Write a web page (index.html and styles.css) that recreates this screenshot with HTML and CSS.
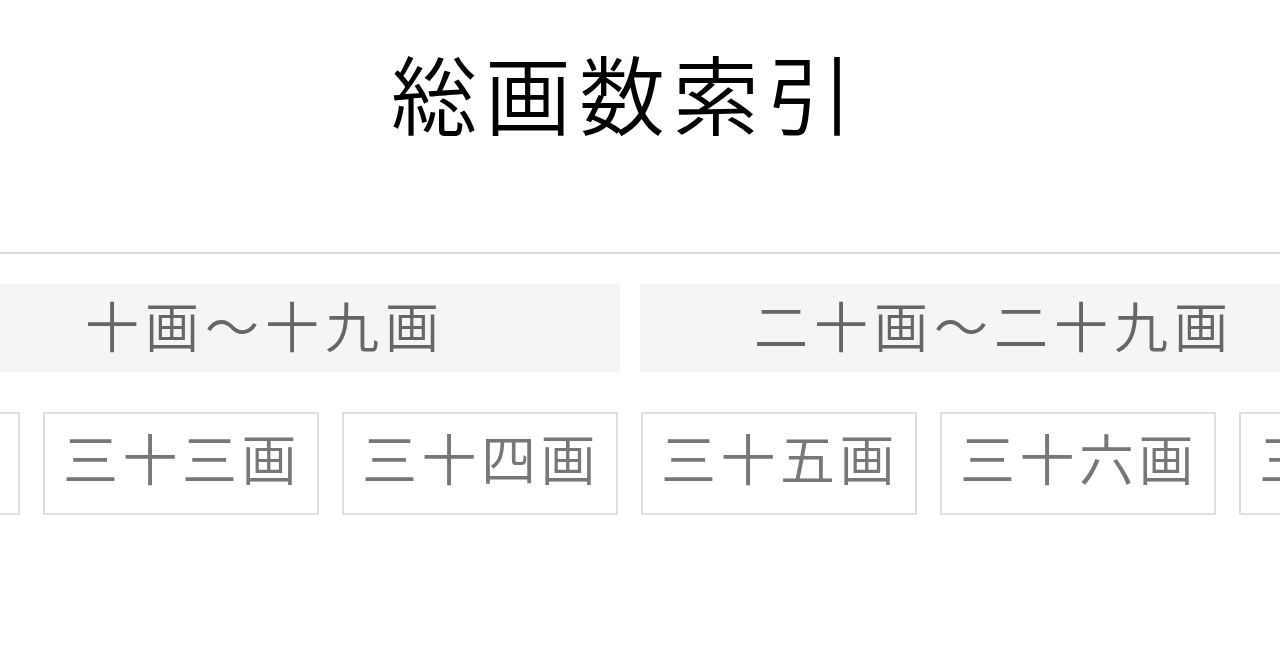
FILE: index.html
```html
<!DOCTYPE html>
<html lang="ja">
<head>
<meta charset="utf-8">
<title>総画数索引</title>
<link rel="stylesheet" href="styles.css">
</head>
<body>
<main class="page">
  <h1 class="title">総画数索引</h1>
  <hr class="rule">
  <div class="ranges">
    <a class="range">十画～十九画</a>
    <a class="range range-wide">二十画～二十九画</a>
  </div>
  <div class="counts">
    <a class="count">三十二画</a>
    <a class="count">三十三画</a>
    <a class="count">三十四画</a>
    <a class="count">三十五画</a>
    <a class="count">三十六画</a>
    <a class="count">三十七画</a>
  </div>
</main>
</body>
</html>
```

FILE: styles.css
```css
html, body {
  margin: 0;
  padding: 0;
  background: #ffffff;
}
body {
  width: 1280px;
  height: 668px;
  overflow: hidden;
  font-family: "Noto Sans CJK JP", "Noto Sans", sans-serif;
}
.page {
  padding-top: 40px;
}
.title {
  margin: 0;
  padding-right: 28px;
  font-size: 86px;
  font-weight: 350;
  letter-spacing: 8px;
  line-height: 104px;
  color: #000000;
  text-align: center;
}
.rule {
  margin: 108px 0 0 0;
  border: 0;
  border-top: 2px solid #d8d8d8;
  height: 0;
}
.ranges {
  display: flex;
  gap: 20px;
  margin: 30px 0 0 -96px;
}
.range {
  flex: 0 0 716px;
  height: 88px;
  padding-left: 6px;
  box-sizing: border-box;
  background: #f4f5f5;
  color: #666666;
  font-size: 54px;
  font-weight: 350;
  letter-spacing: 6px;
  line-height: 82px;
  text-align: center;
  white-space: nowrap;
}
.range-wide {
  padding-left: 0;
  padding-right: 8px;
}
.counts {
  display: flex;
  gap: 23px;
  margin: 40px 0 0 -256px;
}
.count {
  flex: 0 0 276px;
  box-sizing: border-box;
  height: 103px;
  padding-left: 2px;
  border: 2px solid #dedede;
  color: #777777;
  font-size: 55px;
  font-weight: 350;
  letter-spacing: 4.5px;
  line-height: 84px;
  text-align: center;
  white-space: nowrap;
}
```
